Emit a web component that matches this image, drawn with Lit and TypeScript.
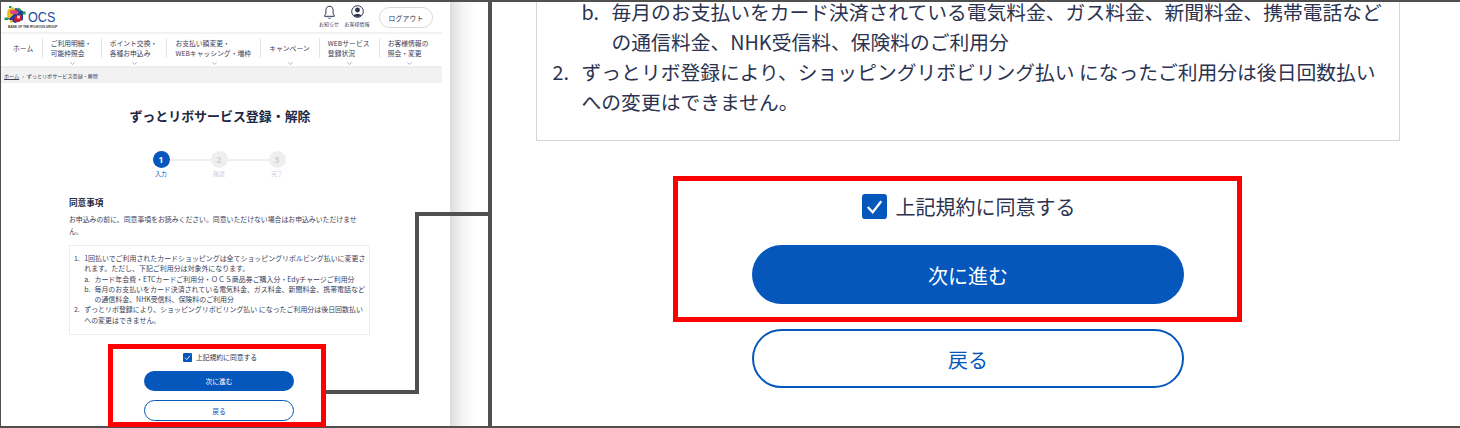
import { LitElement, html, css, svg } from "lit";
import { customElement } from "lit/decorators.js";

const NAV = [
  ["ホーム"],
  ["ご利用明細・", "可能枠照会"],
  ["ポイント交換・", "各種お申込み"],
  ["お支払い額変更・", "WEBキャッシング・増枠"],
  ["キャンペーン"],
  ["WEBサービス", "登録状況"],
  ["お客様情報の", "照会・変更"],
];

const check = svg`<svg viewBox="0 0 24 24" class="check-svg"><rect width="24" height="24" rx="3" fill="#0557bb"/><path d="M5.5 12.5 10.3 17.5 18.5 7" fill="none" stroke="#fff" stroke-width="2.2"/></svg>`;

@customElement("app-root")
export class AppRoot extends LitElement {
  static styles = css`
    :host { display: block; width: 1460px; height: 428px; overflow: hidden; position: relative; background: #fff;
      font-family: "Noto Sans CJK JP", "Noto Sans", sans-serif; color: #2c3350; }
    * { box-sizing: border-box; }
    .frame { display: flex; height: 428px; border-top: 2px solid #505050; border-left: 1px solid #505050; border-bottom: 2px solid #505050; }
    .left { width: 449px; flex: none; }
    .page { width: 441px; }
    .shade { width: 38px; flex: none; background: linear-gradient(90deg, #dcdcdc 0, #f4f4f4 12px, #fff 26px); }
    .divider { width: 4px; flex: none; background: #505050; }
    .right { flex: 1; padding-left: 44px; overflow: hidden; }

    .header { height: 32px; display: flex; align-items: flex-start; border-bottom: 2px solid #f2f2f2; }
    .logo { width: 56px; height: 26px; margin: 4px 0 0 3px; flex: none; position: relative; font-family: "Liberation Sans", sans-serif; }
    .globe { width: 22px; height: 18px; display: block; }
    .ocs { position: absolute; left: 23.5px; top: 2px; font-size: 15px; line-height: 17px; color: #1b4ea0; transform: scaleX(.84); transform-origin: 0 50%; white-space: nowrap; }
    .group { position: absolute; left: 4px; top: 18.5px; font-size: 3.1px; line-height: 4px; font-weight: 700; color: #333; white-space: nowrap; }
    .tools { margin-left: auto; display: flex; align-items: flex-start; }
    .tool { display: flex; flex-direction: column; align-items: center; width: 28px; font-size: 5px; line-height: 6px; padding-top: 3px; color: #3a4058; white-space: nowrap; }
    .tool svg { width: 13px; height: 15px; display: block; margin-bottom: 1px; }
    .logout { width: 54px; height: 21px; margin: 5px 9px 0 8px; border: 1px solid #d8d8d8; border-radius: 11px; font-size: 6.8px; display: flex; align-items: center; justify-content: center; letter-spacing: .2px; }

    .nav { height: 34px; display: flex; border-bottom: 2px solid #eeeeee; padding-top: 4px; }
    .nav-item { position: relative; padding: 0 9.2px 0 8px; height: 20px; font-size: 6.8px; line-height: 10.2px; border-left: 1px solid #e4e4e4; white-space: nowrap; display: flex; flex-direction: column; justify-content: center; color: #3a4058; }
    .nav-item:first-child { border-left: 0; padding: 0 8.5px 0 12px; }
    .chev { position: absolute; left: 50%; bottom: -6.5px; width: 5px; height: 3px; margin-left: -2px; }
    .crumbs { height: 15px; background: #f2f2f2; font-size: 5.1px; display: flex; align-items: center; padding-left: 3px; gap: 3px; color: #3a4058; }
    .crumbs u { text-underline-offset: 1px; }

    .content { padding: 0 71px 0 68px; }
    h1 { margin: 23px 0 0; font-size: 12.95px; line-height: 20px; font-weight: 700; text-align: center; color: #202742; white-space: nowrap; }
    .steps { display: flex; justify-content: center; margin: 25px 0 0 -2px; }
    .step { width: 58px; display: flex; flex-direction: column; align-items: center; position: relative; font-size: 5.8px; line-height: 8px; color: #ccd0dc; }
    .step + .step::before { content: ""; position: absolute; top: 7.5px; left: -29px; width: 58px; height: 2px; background: #efefef; }
    .dot { width: 17px; height: 17px; border-radius: 50%; background: #efefef; color: #ccd0dc; font-size: 8.5px; font-weight: 700; display: flex; align-items: center; justify-content: center; position: relative; z-index: 1; margin-bottom: 2px; font-family: "Noto Sans", sans-serif; }
    .step.on { color: #0557bb; }
    .step.on .dot { background: #0557bb; color: #fff; }
    h2 { margin: 18px 0 0; font-size: 8.6px; line-height: 12px; font-weight: 700; color: #202742; }
    .lead { margin: 5px 0 0; font-size: 6.86px; line-height: 12px; width: 292px; color: #3a4058; }
    .terms { margin-top: 8px; height: 90px; width: 301px; border: 1px solid #ececec; padding: 7px 3px 0 4px; font-size: 6.94px; line-height: 10.3px; color: #3a4058; }
    .agree { display: flex; align-items: center; justify-content: center; gap: 4px; }
    .agree.small { margin: 15px 0 0 0; height: 14px; font-size: 6.8px; }
    .agree.small .check-svg { width: 9px; height: 9px; }
    .btn { display: flex; align-items: center; justify-content: center; border-radius: 999px; background: #0557bb; color: #fff; border: 0 solid #0557bb; }
    .btn.ghost { background: #fff; color: #0557bb; }
    .btn.s { width: 150px; height: 20px; font-size: 6.8px; margin: 7px 0 0 75px; }
    .btn.s.ghost { height: 21px; margin-top: 9px; border-width: 1px; }

    ol { margin: 0; padding: 0; list-style: none; }
    .li { display: flex; }
    .mark { flex: none; }
    .terms .mark { width: 10.2px; }
    .terms .sub { padding-left: 10.2px; }
    .terms .sub .mark { width: 10.3px; }

    .r-wrap { width: 864px; height: 139px; border: 1px solid #d5d5d5; border-top: 0; padding: 0 0 0 15.6px; font-size: 19.78px; line-height: 20px; color: #2c3350; white-space: nowrap; display: flex; flex-direction: column; gap: 10px; }
    .r-wrap .mark { width: 29px; }
    .r-wrap .sub { padding-left: 29px; }
    .r-wrap .sub .mark { width: 30px; }
    .agree.big { margin: 52px 0 0 2px; width: 864px; height: 26px; font-size: 20px; gap: 9px; padding-right: 3px; }
    .agree.big .check-svg { width: 25px; height: 25px; }
    .btn.b { width: 432px; height: 59px; font-size: 20px; margin: 26px 0 0 216px; padding-top: 2px; }
    .btn.b.ghost { margin-top: 25px; border-width: 2.5px; }

    .red { position: absolute; border: 5px solid #f00; pointer-events: none; }
    .red.a { left: 108px; top: 344px; width: 218px; height: 83px; }
    .red.b { left: 673px; top: 176px; width: 569px; height: 146px; }
    .wire { position: absolute; left: 326px; top: 212px; width: 164px; height: 182px; pointer-events: none; }
  `;

  private bell() {
    return svg`<svg viewBox="0 0 13 15"><path d="M6.5 1.2c-2.4 0-3.6 1.9-3.6 4v3.2L1.6 10.800v.5h9.800v-.5L10.100 8.400V5.200c0-2.100-1.200-4-3.600-4Z" fill="none" stroke="#2c3350" stroke-width="1"/><path d="M5 12.600c.3 1.100 2.700 1.100 3 0" fill="none" stroke="#2c3350" stroke-width=".9"/></svg>`;
  }
  private person() {
    return svg`<svg viewBox="0 0 13 15"><circle cx="6.500" cy="6.500" r="5.800" fill="none" stroke="#2c3350" stroke-width="1"/><circle cx="6.500" cy="5" r="2.400" fill="#2c3350"/><path d="M2.600 10.600c.6-2.300 7.200-2.300 7.800 0-1.800 1.800-6 1.800-7.800 0Z" fill="#2c3350"/></svg>`;
  }
  private globe() {
    return svg`<svg class="globe" viewBox="0 0 22 18">
      <path d="M4 6 12 2 19 5 19 14 11 17 4 13Z" fill="#1f3f9e"/>
      <path d="M3.500 4 9 1 12 5 9 9 5 13 3 10Z" fill="#e8c21b"/>
      <path d="M5.500 4.500 12 4 15 6.500 13 8 7 8Z" fill="#e2447f"/>
      <path d="M11 10 17 9 18 13 15 16 10 15Z" fill="#d3162a"/>
      <path d="M13 9.500h3v3h-3Z" fill="#fff" opacity=".75"/>
      <path d="M14 1.500 17 3 15.500 5.500 13 4Z" fill="#1d9a4a"/>
      <rect x="0.500" y="11.500" width="3.500" height="2.500" fill="#1d9a4a"/>
      <rect x="18.500" y="5.500" width="3" height="3" fill="#1d9a4a"/>
      <rect x="5" y="0" width="2.500" height="2" fill="#1d9a4a"/>
      <rect x="6" y="14" width="2.500" height="2.500" fill="#e8c21b"/>
    </svg>`;
  }

  private termsList() {
    return html`<ol>
      <div class="li"><span class="mark">1.</span><span>1回払いでご利用されたカードショッピングは全てショッピングリボルビング払いに変更されます。ただし、下記ご利用分は対象外になります。</span></div>
      <div class="sub">
        <div class="li"><span class="mark">a.</span><span>カード年会費・ETCカードご利用分・ＯＣＳ商品券ご購入分・Edyチャージご利用分</span></div>
        <div class="li"><span class="mark">b.</span><span>毎月のお支払いをカード決済されている電気料金、ガス料金、新聞料金、携帯電話などの通信料金、NHK受信料、保険料のご利用分</span></div>
      </div>
      <div class="li"><span class="mark">2.</span><span>ずっとリボ登録により、ショッピングリボビリング払い になったご利用分は後日回数払いへの変更はできません。</span></div>
    </ol>`;
  }

  render() {
    return html`
      <div class="frame">
        <div class="left">
          <div class="page">
            <div class="header">
              <div class="logo">
                ${this.globe()}
                <span class="ocs">OCS</span>
                <span class="group">BANK OF THE RYUKYUS GROUP</span>
              </div>
              <div class="tools">
                <div class="tool">${this.bell()}<span>お知らせ</span></div>
                <div class="tool">${this.person()}<span>お客様情報</span></div>
                <div class="logout">ログアウト</div>
              </div>
            </div>
            <div class="nav">
              ${NAV.map(
                (lines, i) => html`<div class="nav-item">
                  ${lines.map((l) => html`<div>${l}</div>`)}
                  ${i > 0
                    ? html`<svg class="chev" viewBox="0 0 5 3"><path d="M.4.4 2.500 2.400 4.600.4" fill="none" stroke="#7d8294" stroke-width=".6"/></svg>`
                    : ""}
                </div>`
              )}
            </div>
            <div class="crumbs"><u>ホーム</u><span>›</span><span>ずっとリボサービス登録・解除</span></div>
            <div class="content">
              <h1>ずっとリボサービス登録・解除</h1>
              <div class="steps">
                <div class="step on"><div class="dot">1</div>入力</div>
                <div class="step"><div class="dot">2</div>確認</div>
                <div class="step"><div class="dot">3</div>完了</div>
              </div>
              <h2>同意事項</h2>
              <p class="lead">お申込みの前に、同意事項をお読みください。同意いただけない場合はお申込みいただけません。</p>
              <div class="terms">${this.termsList()}</div>
              <div class="agree small">${check}<span>上記規約に同意する</span></div>
              <div class="btn s">次に進む</div>
              <div class="btn s ghost">戻る</div>
            </div>
          </div>
        </div>
        <div class="shade"></div>
        <div class="divider"></div>
        <div class="right">
          <div class="r-wrap">
            <div class="sub li"><span class="mark">b.</span><span>毎月のお支払いをカード決済されている電気料金、ガス料金、新聞料金、携帯電話など</span></div>
            <div class="sub li"><span class="mark"></span><span>の通信料金、NHK受信料、保険料のご利用分</span></div>
            <div class="li"><span class="mark">2.</span><span>ずっとリボ登録により、ショッピングリボビリング払い になったご利用分は後日回数払い</span></div>
            <div class="li"><span class="mark"></span><span>への変更はできません。</span></div>
          </div>
          <div class="agree big">${check}<span>上記規約に同意する</span></div>
          <div class="btn b">次に進む</div>
          <div class="btn b ghost">戻る</div>
        </div>
      </div>
      <svg class="wire" viewBox="0 0 164 182"><path d="M0 180H91V2H164" fill="none" stroke="#505050" stroke-width="4"/></svg>
      <div class="red a"></div>
      <div class="red b"></div>
    `;
  }
}
